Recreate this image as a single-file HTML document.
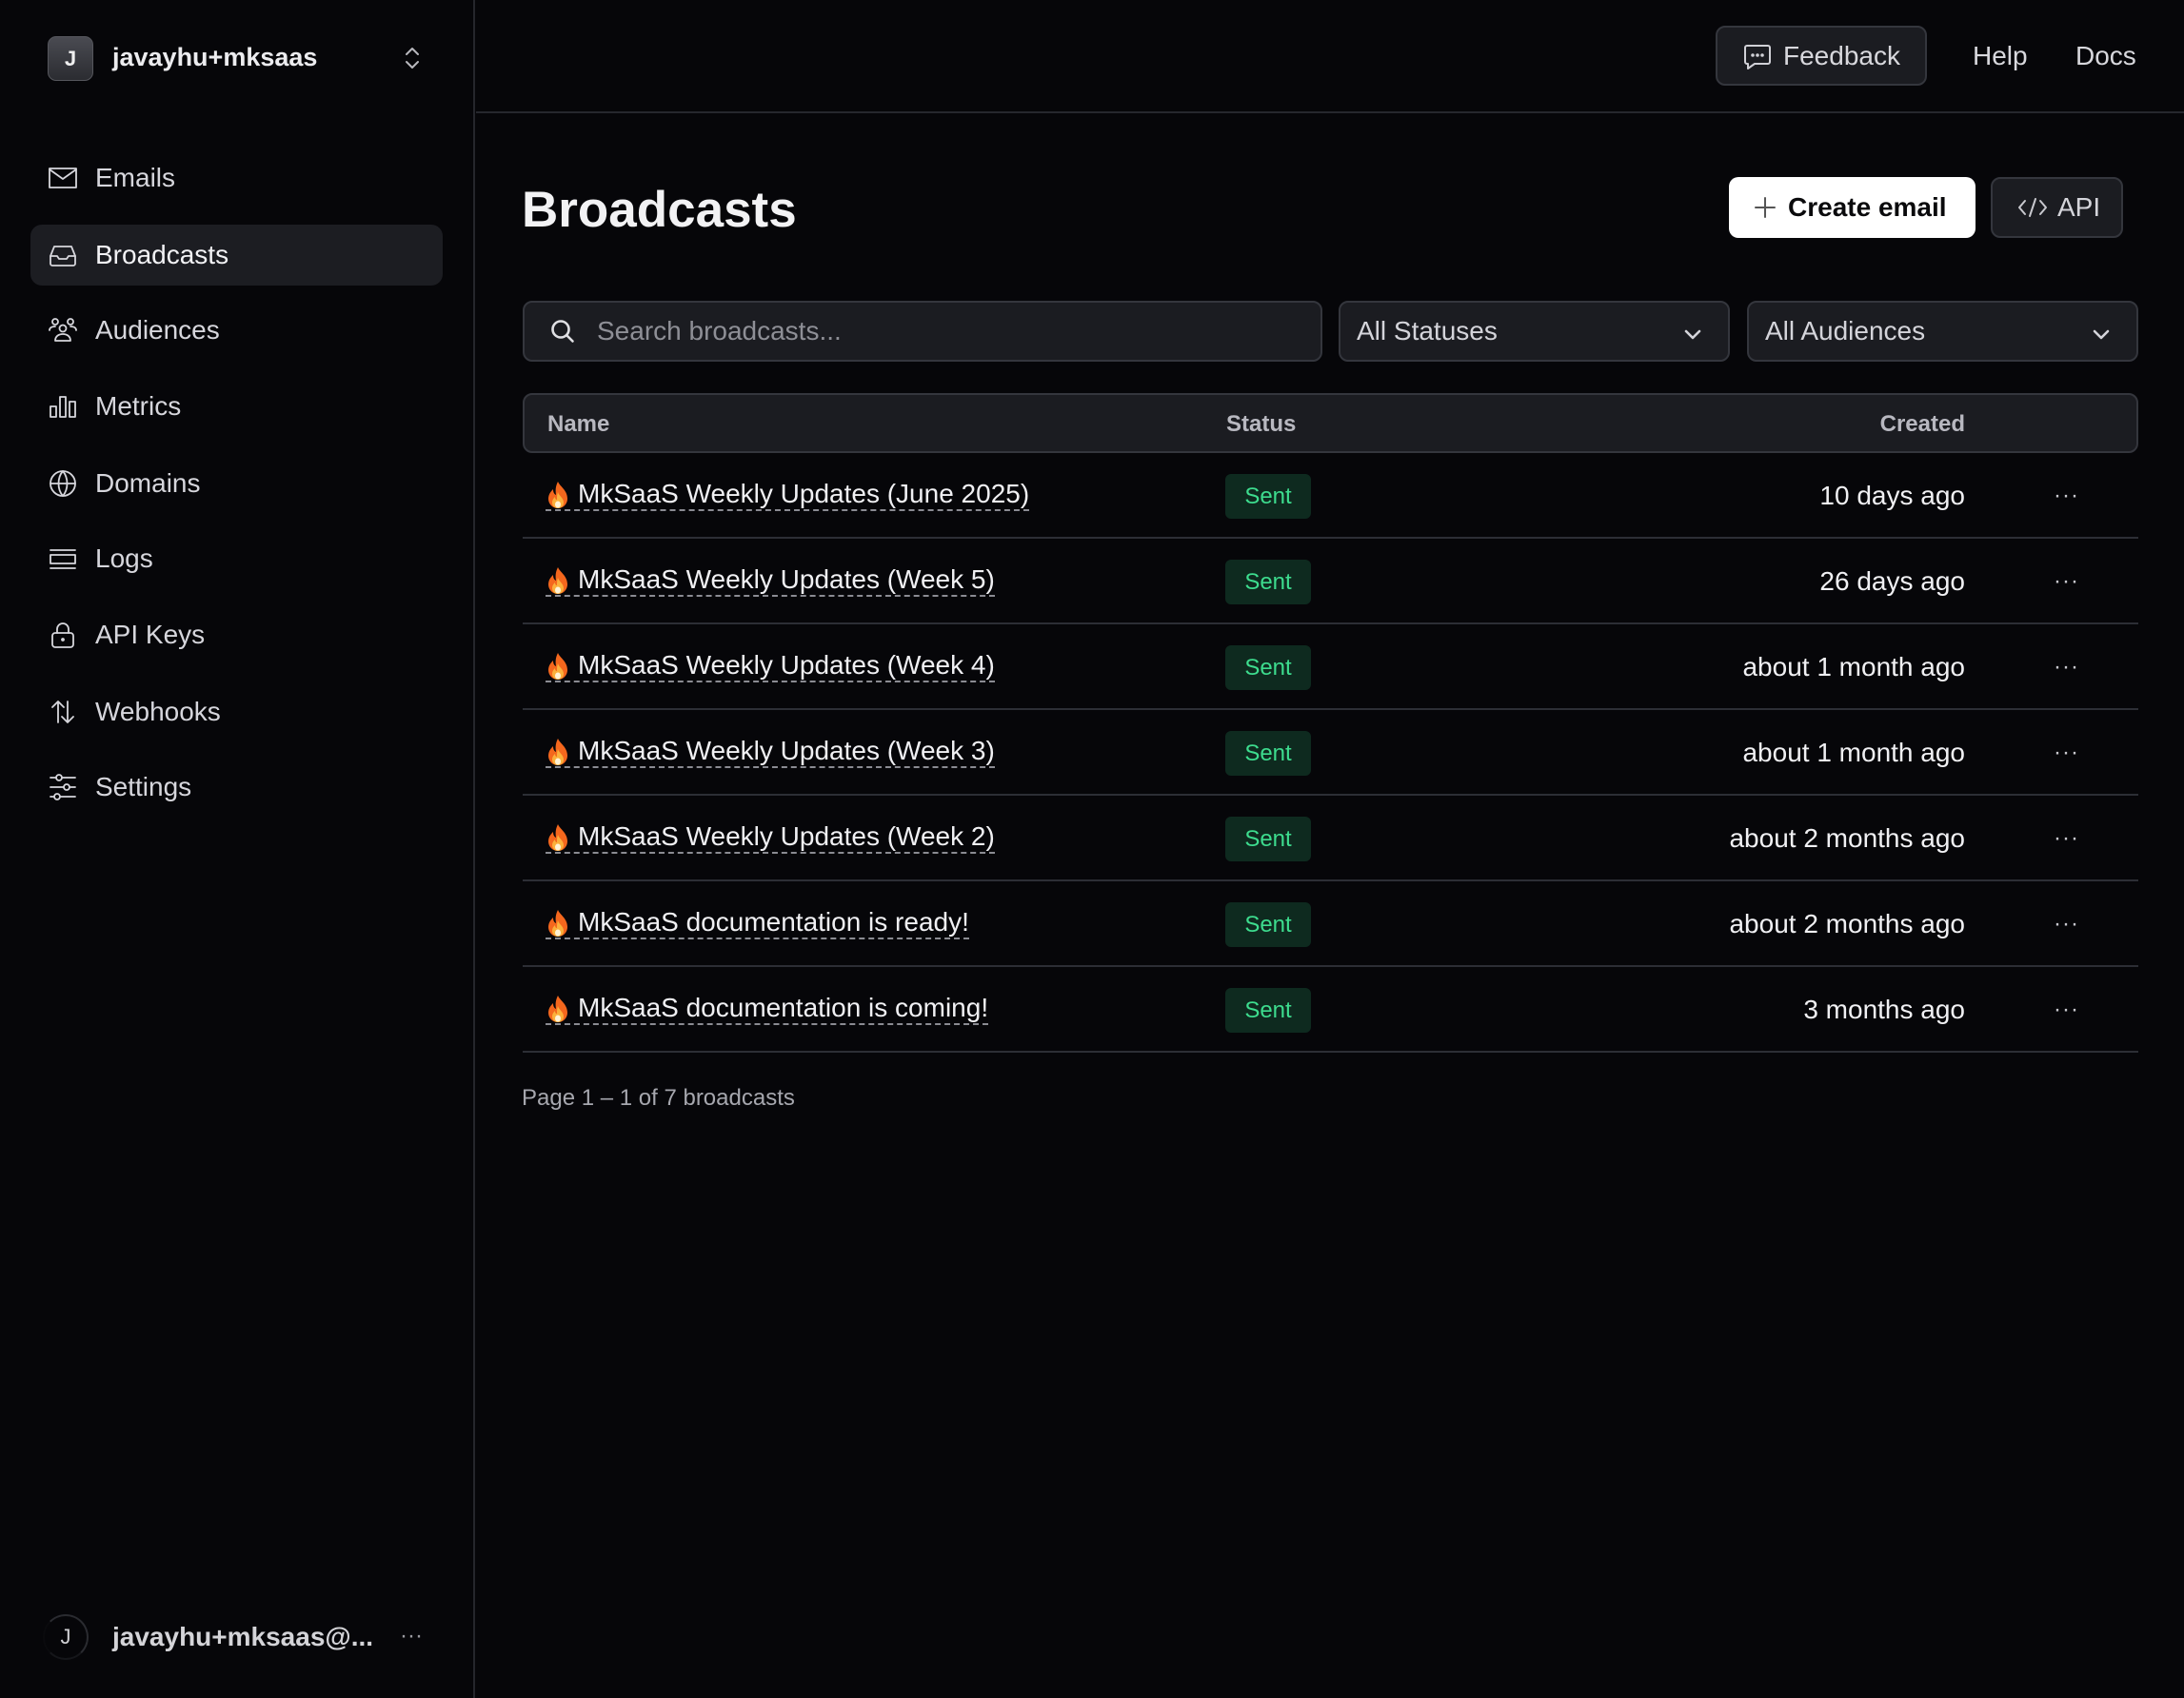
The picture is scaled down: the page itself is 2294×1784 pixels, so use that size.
<!DOCTYPE html>
<html><head><meta charset="utf-8"><style>
*{box-sizing:border-box;margin:0;padding:0}
body{width:2294px;height:1784px;background:#060609;font-family:"Liberation Sans",sans-serif;color:#ececef;position:relative;overflow:hidden}
.abs{position:absolute}
.side{left:0;top:0;width:499px;height:1784px;border-right:2px solid #25262c}
.nav{position:absolute;left:32px;width:433px;height:64px;border-radius:12px;display:flex;align-items:center;font-size:28px;color:#d6d6dc}
.nav svg{position:absolute;left:19px;width:30px;height:30px;fill:none;stroke:#d6d6dc;stroke-width:1.8;stroke-linecap:round;stroke-linejoin:round}
.nav span{position:absolute;left:68px}
.nav.act{background:#1c1d22;color:#f2f2f5}
.box{position:absolute;border:2px solid #34363d;background:#1b1c21;border-radius:10px}
.sel{font-size:28px;color:#d4d4da;display:flex;align-items:center;padding-left:17px}
.sel svg{position:absolute;right:26px;top:22px;width:22px;height:22px;fill:none;stroke:#d4d4da;stroke-width:2.6;stroke-linecap:round;stroke-linejoin:round}
.row{position:absolute;left:549px;width:1697px;height:90px;border-bottom:2px solid #2c2e35}
.row .nm{position:absolute;left:24px;top:27px;font-size:28px;color:#f0f0f3;border-bottom:2px dashed #8a8b92;line-height:32px;padding-left:34px}
.row .nm svg{position:absolute;left:0;top:2px;width:26px;height:30px}
.badge{position:absolute;left:738px;top:22px;width:90px;height:47px;background:#0e2a1f;border-radius:6px;color:#3ddc8e;font-size:24px;display:flex;align-items:center;justify-content:center}
.cr{position:absolute;right:182px;top:29px;font-size:28px;color:#f0f0f3}
.dots{position:absolute;left:1608px;top:31px;font-size:24px;color:#c8c8ce;letter-spacing:1px}
</style></head><body>
<div class="abs side">
  <div class="abs" style="left:50px;top:38px;width:48px;height:47px;border-radius:9px;background:linear-gradient(#4a4b52,#2b2c31);border:1px solid #55565c;color:#f0f0f0;font-weight:bold;font-size:22px;display:flex;align-items:center;justify-content:center">J</div>
  <div class="abs" style="left:118px;top:45px;font-size:27px;font-weight:bold;color:#ececef">javayhu+mksaas</div>
  <svg class="abs" style="left:421px;top:47px" width="24" height="28" viewBox="0 0 24 28" fill="none" stroke="#b8b8be" stroke-width="2" stroke-linecap="round" stroke-linejoin="round"><path d="M6 10l6-6 6 6M6 18l6 6 6-6"/></svg>

  <div class="nav" style="top:155px"><svg viewBox="0 0 30 30"><rect x="1" y="5" width="28" height="20"/><path d="M1 6l14 10 14-10"/></svg><span>Emails</span></div>
  <div class="nav act" style="top:236px"><svg viewBox="0 0 30 30"><path d="M2 16l4-10h18l4 10v8a2 2 0 01-2 2H4a2 2 0 01-2-2z"/><path d="M2 16h7l2 3h8l2-3h7"/></svg><span>Broadcasts</span></div>
  <div class="nav" style="top:315px"><svg viewBox="0 0 30 30"><circle cx="7" cy="6" r="3"/><circle cx="23" cy="6" r="3"/><circle cx="15" cy="13" r="3.5"/><path d="M1 15c0-3 3-4 6-4M29 15c0-3-3-4-6-4M7 26c0-5 4-7 8-7s8 2 8 7z"/></svg><span>Audiences</span></div>
  <div class="nav" style="top:395px"><svg viewBox="0 0 30 30"><rect x="2" y="15" width="6" height="11"/><rect x="12" y="5" width="6" height="21"/><rect x="22" y="10" width="6" height="16"/></svg><span>Metrics</span></div>
  <div class="nav" style="top:476px"><svg viewBox="0 0 30 30"><circle cx="15" cy="15" r="13"/><path d="M2 15h26M15 2c-6 7-6 19 0 26M15 2c6 7 6 19 0 26"/></svg><span>Domains</span></div>
  <div class="nav" style="top:555px"><svg viewBox="0 0 30 30"><path d="M2 6h26M2 25h26"/><rect x="2" y="11" width="26" height="9"/></svg><span>Logs</span></div>
  <div class="nav" style="top:635px"><svg viewBox="0 0 30 30"><rect x="4" y="13" width="22" height="15" rx="3"/><path d="M9 13V9a6 6 0 0112 0v4"/><circle cx="15" cy="20" r="1" fill="#d6d6dc"/></svg><span>API Keys</span></div>
  <div class="nav" style="top:716px"><svg viewBox="0 0 30 30"><path d="M10 26V4M4 10l6-6 6 6M20 4v22M14 20l6 6 6-6"/></svg><span>Webhooks</span></div>
  <div class="nav" style="top:795px"><svg viewBox="0 0 30 30"><path d="M2 5h6M14 5h14M2 15h14M22 15h6M2 25h4M12 25h16"/><circle cx="11" cy="5" r="3"/><circle cx="19" cy="15" r="3"/><circle cx="9" cy="25" r="3"/></svg><span>Settings</span></div>

  <div class="abs" style="left:45px;top:1696px;width:48px;height:48px;border-radius:50%;border:2px solid #2a2b30;border-left-color:#0a0a0d;border-bottom-color:#15161a;color:#d0d0d4;font-size:22px;display:flex;align-items:center;justify-content:center">J</div>
  <div class="abs" style="left:118px;top:1704px;font-size:28px;font-weight:bold;color:#d4d4d8">javayhu+mksaas@...</div>
  <div class="abs" style="left:420px;top:1705px;font-size:24px;color:#9a9aa0">···</div>
</div>

<div class="abs" style="left:500px;top:117px;width:1794px;height:2px;background:#26272d"></div>
<div class="box" style="left:1802px;top:27px;width:222px;height:63px;display:flex;align-items:center;font-size:28px;color:#d8d8dd;padding-left:27px">
  <svg width="30" height="30" viewBox="0 0 30 30" fill="none" stroke="#d0d0d6" stroke-width="2" stroke-linejoin="round"><path d="M4 4h22a2 2 0 012 2v15a2 2 0 01-2 2H12l-7 5v-5H4a2 2 0 01-2-2V6a2 2 0 012-2z"/><circle cx="10" cy="14" r=".8" fill="#d0d0d6"/><circle cx="15" cy="14" r=".8" fill="#d0d0d6"/><circle cx="20" cy="14" r=".8" fill="#d0d0d6"/></svg>
  <span style="margin-left:12px">Feedback</span></div>
<div class="abs" style="left:2072px;top:43px;font-size:28px;color:#d8d8dd">Help</div>
<div class="abs" style="left:2180px;top:43px;font-size:28px;color:#d8d8dd">Docs</div>

<div class="abs" style="left:548px;top:190px;font-size:53px;font-weight:bold;color:#f2f2f4">Broadcasts</div>
<div class="abs" style="left:1816px;top:186px;width:259px;height:64px;background:#fff;border-radius:10px;display:flex;align-items:center;padding-left:26px;color:#0a0a0c;font-size:28px;font-weight:bold">
  <svg width="24" height="24" viewBox="0 0 24 24" stroke="#555" stroke-width="2" stroke-linecap="round"><path d="M12 2v20M2 12h20"/></svg><span style="margin-left:12px">Create email</span></div>
<div class="box" style="left:2091px;top:186px;width:139px;height:64px;display:flex;align-items:center;padding-left:26px;font-size:28px;color:#d4d4da">
  <svg width="32" height="24" viewBox="0 0 32 24" fill="none" stroke="#c8c8ce" stroke-width="2" stroke-linecap="round" stroke-linejoin="round"><path d="M8 5l-6 7 6 7M24 5l6 7-6 7M19 3l-6 18"/></svg><span style="margin-left:10px">API</span></div>

<div class="box sel" style="left:549px;top:316px;width:840px;height:64px;padding-left:26px">
  <svg style="position:static;width:28px;height:28px;stroke:#e0e0e4" viewBox="0 0 28 28"><circle cx="12" cy="12" r="8.5"/><path d="M18.5 18.5l6 6"/></svg>
  <span style="margin-left:22px;color:#8e8f96">Search broadcasts...</span></div>
<div class="box sel" style="left:1406px;top:316px;width:411px;height:64px"><span>All Statuses</span><svg viewBox="0 0 22 22"><path d="M4 8l7 7 7-7"/></svg></div>
<div class="box sel" style="left:1835px;top:316px;width:411px;height:64px"><span>All Audiences</span><svg viewBox="0 0 22 22"><path d="M4 8l7 7 7-7"/></svg></div>

<div class="box" style="left:549px;top:413px;width:1697px;height:63px;font-size:24px;font-weight:bold;color:#b8b8c0">
  <span class="abs" style="left:24px;top:17px">Name</span>
  <span class="abs" style="left:737px;top:17px">Status</span>
  <span class="abs" style="right:180px;top:17px">Created</span>
</div>

<svg width="0" height="0" style="position:absolute"><defs><symbol id="fl" viewBox="0 0 26 30"><path d="M13 1c2 5 10 9 10 18a10 10 0 01-20 0c0-5 3-8 5-10 0 3 1 5 3 6-1-6 0-10 2-14z" fill="#f4671d"/><path d="M13 12c1 4 6 6 6 11a6 6 0 01-12 0c0-3 2-5 3-6 0 2 1 3 2 3 0-3 0-5 1-8z" fill="#fbb03b"/><ellipse cx="13" cy="25" rx="3" ry="3.5" fill="#fff3d6"/></symbol></defs></svg>

<div class="row" style="top:476px"><div class="nm"><svg><use href="#fl"/></svg>MkSaaS Weekly Updates (June 2025)</div><div class="badge">Sent</div><div class="cr">10 days ago</div><div class="dots">···</div></div>
<div class="row" style="top:566px"><div class="nm"><svg><use href="#fl"/></svg>MkSaaS Weekly Updates (Week 5)</div><div class="badge">Sent</div><div class="cr">26 days ago</div><div class="dots">···</div></div>
<div class="row" style="top:656px"><div class="nm"><svg><use href="#fl"/></svg>MkSaaS Weekly Updates (Week 4)</div><div class="badge">Sent</div><div class="cr">about 1 month ago</div><div class="dots">···</div></div>
<div class="row" style="top:746px"><div class="nm"><svg><use href="#fl"/></svg>MkSaaS Weekly Updates (Week 3)</div><div class="badge">Sent</div><div class="cr">about 1 month ago</div><div class="dots">···</div></div>
<div class="row" style="top:836px"><div class="nm"><svg><use href="#fl"/></svg>MkSaaS Weekly Updates (Week 2)</div><div class="badge">Sent</div><div class="cr">about 2 months ago</div><div class="dots">···</div></div>
<div class="row" style="top:926px"><div class="nm"><svg><use href="#fl"/></svg>MkSaaS documentation is ready!</div><div class="badge">Sent</div><div class="cr">about 2 months ago</div><div class="dots">···</div></div>
<div class="row" style="top:1016px"><div class="nm"><svg><use href="#fl"/></svg>MkSaaS documentation is coming!</div><div class="badge">Sent</div><div class="cr">3 months ago</div><div class="dots">···</div></div>

<div class="abs" style="left:548px;top:1140px;font-size:24px;color:#a6a7ae">Page 1 – 1 of 7 broadcasts</div>
</body></html>
